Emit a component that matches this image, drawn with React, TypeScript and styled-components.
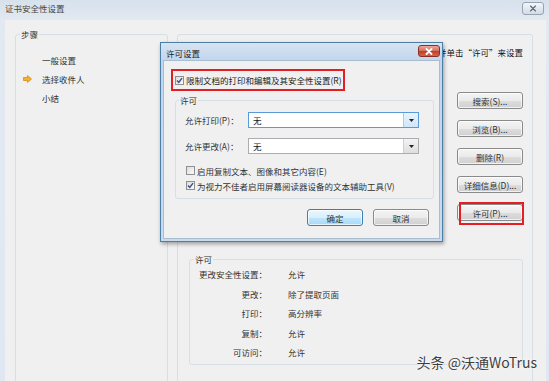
import React from "react";
import styled, { createGlobalStyle } from "styled-components";

const GlobalStyle = createGlobalStyle`
  html, body { margin: 0; padding: 0; }
  body {
    font-family: "Noto Sans CJK SC", "Noto Sans", sans-serif;
    font-size: 8.5px;
    color: #222;
    background: #f0f0f0;
  }
`;

const Window = styled.div`
  position: relative;
  width: 549px;
  height: 381px;
  overflow: hidden;
  display: flex;
  flex-direction: column;
  background: linear-gradient(to bottom, #d7e1ec 0, #e2e9f1 20px, #dfe8f2 100%);
`;

const TitleBar = styled.div`
  height: 20px;
  flex: none;
  box-sizing: border-box;
  display: flex;
  align-items: flex-start;
  justify-content: space-between;
  padding: 2px 5px 0 5px;
  line-height: 12px;
  color: #444;
`;

const CloseBox = styled.div<{ $danger?: boolean }>`
  width: 22px;
  height: 13px;
  box-sizing: border-box;
  border: 1px solid ${(p) => (p.$danger ? "#8a2f22" : "#97a3b1")};
  border-radius: 3px;
  background: ${(p) =>
    p.$danger
      ? "linear-gradient(to bottom, #e9a99c 0%, #d5735f 45%, #c13f28 55%, #d2654c 100%)"
      : "linear-gradient(to bottom, #f3f6f9 0%, #e2e8ef 50%, #d3dbe4 100%)"};
  display: flex;
  align-items: center;
  justify-content: center;
`;

const Client = styled.div`
  flex: 1;
  min-height: 0;
  margin: 0 3px 0 5px;
  background: #f0f0f0;
  display: flex;
  gap: 9px;
  padding: 8px 0 0 10px;
`;

const Group = styled.fieldset`
  margin: 0;
  min-width: 0;
  box-sizing: border-box;
  border: 1px solid #d5dfe5;
  border-radius: 3px;
  padding: 0 4px;
`;

const Legend = styled.legend`
  padding: 0 1px;
  line-height: 12px;
  color: #333;
`;

const StepsGroup = styled(Group)`
  width: 153px;
  margin-bottom: -10px;
`;

const StepList = styled.div`
  margin-top: 10px;
  padding-left: 3px;
`;

const Step = styled.div`
  height: 19px;
  display: flex;
  align-items: center;
  color: #333;
`;

const StepMarker = styled.span`
  width: 19px;
  display: flex;
  align-items: center;
`;

const RightPanel = styled.div`
  width: 356px;
  box-sizing: border-box;
  margin-top: 6px;
  margin-bottom: -10px;
  border: 1px solid #d5dfe5;
  border-radius: 3px;
  padding: 0 9px 0 11px;
  display: flex;
  flex-direction: column;
`;

const Hint = styled.div`
  margin-top: 11px;
  line-height: 12px;
  text-align: right;
  white-space: nowrap;
  overflow: hidden;
  color: #111;
`;

const ActionColumn = styled.div`
  align-self: flex-end;
  width: 66px;
  margin-top: 34px;
  display: flex;
  flex-direction: column;
  gap: 11px;
`;

const WinButton = styled.div<{ $default?: boolean; $w?: number }>`
  width: ${(p) => p.$w ?? 66}px;
  height: 17px;
  box-sizing: border-box;
  border: 1px solid ${(p) => (p.$default ? "#3c7fb1" : "#8a8a8a")};
  border-radius: 3px;
  background: ${(p) =>
    p.$default
      ? "linear-gradient(to bottom, #eaf6fd 0%, #d9f0fc 50%, #bee6fd 52%, #a7d9f5 100%)"
      : "linear-gradient(to bottom, #f4f4f4 0%, #ebebeb 50%, #dddddd 52%, #d0d0d0 100%)"};
  box-shadow: inset 0 0 0 1px rgba(255, 255, 255, 0.7);
  display: flex;
  align-items: center;
  justify-content: center;
  color: #333;
  line-height: 12px;
`;

const HighlightWrap = styled.div`
  position: relative;
`;

const RedMark = styled.div`
  position: absolute;
  left: 2px;
  top: -2px;
  width: 65px;
  height: 23px;
  box-sizing: border-box;
  border: 2px solid #e31e24;
`;

const PermGroup = styled(Group)`
  margin-top: 32px;
  margin-right: 0;
  padding-bottom: 1px;
`;

const PermRow = styled.div`
  display: grid;
  grid-template-columns: 73px 1fr;
  column-gap: 21px;
  height: 19.5px;
  line-height: 19.5px;
  color: #333;
`;

const PermLabel = styled.span`
  text-align: right;
  white-space: nowrap;
`;

const Dialog = styled.div`
  position: absolute;
  left: 160px;
  top: 42px;
  width: 283px;
  height: 200px;
  box-sizing: border-box;
  border: 1px solid #4b7fa8;
  padding: 0 2px 2px;
  background: linear-gradient(to bottom, #d6e4f3 0, #c3d6ec 17px, #c9dbef 100%);
  box-shadow: 1px 2px 4px rgba(0, 0, 0, 0.35);
  display: flex;
  flex-direction: column;
`;

const DialogTitle = styled.div`
  height: 17px;
  flex: none;
  display: flex;
  justify-content: space-between;
  align-items: flex-start;
  padding-left: 3px;
`;

const DialogTitleText = styled.span`
  margin-top: 4px;
  line-height: 12px;
  color: #222;
`;

const DialogClose = styled(CloseBox)`
  margin-top: 2px;
  height: 12px;
`;

const DialogBody = styled.div`
  flex: 1;
  background: #f0f0f0;
  border: 1px solid #a9bdd1;
  display: flex;
  flex-direction: column;
  padding-top: 8px;
`;

const RedBox = styled.div`
  align-self: flex-start;
  margin-left: 7px;
  height: 22px;
  box-sizing: border-box;
  border: 2px solid #e31e24;
  padding: 0 1px 0 2px;
  display: flex;
  align-items: center;
  gap: 2px;
  white-space: nowrap;
`;

const LimitGroup = styled(Group)`
  margin: 3px 5px 0 11px;
  padding: 0 14px 5px 9px;
  border-color: #d5dfe5;
`;

const LimitLegend = styled(Legend)`
  margin-left: -6px;
`;

const ComboRow = styled.div<{ $gap: number }>`
  display: flex;
  align-items: center;
  height: 16px;
  margin-top: ${(p) => p.$gap}px;
`;

const ComboLabel = styled.span`
  width: 63px;
  flex: none;
  white-space: nowrap;
  color: #333;
`;

const Combo = styled.div<{ $focused?: boolean }>`
  flex: 1;
  height: 16px;
  box-sizing: border-box;
  border: 1px solid ${(p) => (p.$focused ? "#5b9ad8" : "#abadb3")};
  background: #fff;
  display: flex;
  align-items: center;
  padding-left: 4px;
`;

const ComboValue = styled.span`
  flex: 1;
`;

const ComboDrop = styled.span<{ $focused?: boolean }>`
  width: 14px;
  align-self: stretch;
  display: flex;
  align-items: center;
  justify-content: center;
  background: ${(p) =>
    p.$focused
      ? "linear-gradient(to bottom, #e9f4fd, #cfe6fa)"
      : "linear-gradient(to bottom, #f3f3f3, #dedede)"};
  border-left: 1px solid ${(p) => (p.$focused ? "#a9cbec" : "#d0d0d0")};
`;

const CheckRow = styled.div<{ $gap: number }>`
  display: flex;
  align-items: center;
  gap: 2px;
  height: 15px;
  margin-top: ${(p) => p.$gap}px;
  margin-left: 1px;
  white-space: nowrap;
  color: #333;
`;

const Box = styled.span`
  width: 9px;
  height: 9px;
  flex: none;
  box-sizing: border-box;
  border: 1px solid #8f8f8f;
  background: linear-gradient(135deg, #dcdcdc, #fbfbfb);
  display: flex;
  align-items: center;
  justify-content: center;
`;

const DialogButtons = styled.div`
  display: flex;
  justify-content: flex-end;
  gap: 10px;
  margin-top: 10px;
  padding-right: 10px;
`;

const Watermark = styled.div`
  position: absolute;
  right: 12px;
  bottom: 10px;
  font-size: 14px;
  line-height: 18px;
  color: #3d3d3d;
  text-shadow: 0 0 2px #fff, 0 0 1px #fff;
  white-space: nowrap;
`;

function CheckBox({ checked }: { checked?: boolean }) {
  return (
    <Box>
      {checked && (
        <svg width="7" height="7" viewBox="0 0 7 7">
          <polyline points="1,3.6 2.8,5.5 6,1.2" fill="none" stroke="#3b4f82" strokeWidth="1.4" />
        </svg>
      )}
    </Box>
  );
}

function XGlyph({ color, bold }: { color: string; bold?: boolean }) {
  return (
    <svg width="8" height="7" viewBox="0 0 8 7">
      <path d="M1.5 1 L6.5 6 M6.5 1 L1.5 6" stroke={color} strokeWidth={bold ? 1.8 : 1.1} strokeLinecap="round" />
    </svg>
  );
}

function DropArrow() {
  return (
    <svg width="5" height="3" viewBox="0 0 5 3">
      <polygon points="0,0 5,0 2.5,3" fill="#222" />
    </svg>
  );
}

function StepArrow() {
  return (
    <svg width="9" height="8" viewBox="0 0 9 8">
      <polygon points="0.5,2.5 4.5,2.5 4.5,0.5 8.5,4 4.5,7.5 4.5,5.5 0.5,5.5" fill="#f4b22a" stroke="#d98a12" strokeWidth="0.8" />
    </svg>
  );
}

const permissions = [
  ["更改安全性设置：", "允许"],
  ["更改：", "除了提取页面"],
  ["打印：", "高分辨率"],
  ["复制：", "允许"],
  ["可访问：", "允许"],
];

const actions = ["搜索(S)...", "浏览(B)...", "删除(R)", "详细信息(D)..."];

export default function App() {
  return (
    <>
      <GlobalStyle />
      <Window>
        <TitleBar>
          <span>证书安全性设置</span>
          <CloseBox>
            <XGlyph color="#5d6875" />
          </CloseBox>
        </TitleBar>
        <Client>
          <StepsGroup>
            <Legend>步骤</Legend>
            <StepList>
              <Step>
                <StepMarker />
                一般设置
              </Step>
              <Step>
                <StepMarker>
                  <StepArrow />
                </StepMarker>
                选择收件人
              </Step>
              <Step>
                <StepMarker />
                小结
              </Step>
            </StepList>
          </StepsGroup>
          <RightPanel>
            <Hint>选择一个或多个收件人并单击“许可”来设置</Hint>
            <ActionColumn>
              {actions.map((a) => (
                <WinButton key={a}>{a}</WinButton>
              ))}
              <HighlightWrap>
                <WinButton>许可(P)...</WinButton>
                <RedMark />
              </HighlightWrap>
            </ActionColumn>
            <PermGroup>
              <Legend>许可</Legend>
              {permissions.map(([k, v]) => (
                <PermRow key={k}>
                  <PermLabel>{k}</PermLabel>
                  <span>{v}</span>
                </PermRow>
              ))}
            </PermGroup>
          </RightPanel>
        </Client>

        <Dialog>
          <DialogTitle>
            <DialogTitleText>许可设置</DialogTitleText>
            <DialogClose $danger>
              <XGlyph color="#fff" bold />
            </DialogClose>
          </DialogTitle>
          <DialogBody>
            <RedBox>
              <CheckBox checked />
              限制文档的打印和编辑及其安全性设置(R)
            </RedBox>
            <LimitGroup>
              <LimitLegend>许可</LimitLegend>
              <ComboRow $gap={6}>
                <ComboLabel>允许打印(P)：</ComboLabel>
                <Combo $focused>
                  <ComboValue>无</ComboValue>
                  <ComboDrop $focused>
                    <DropArrow />
                  </ComboDrop>
                </Combo>
              </ComboRow>
              <ComboRow $gap={10}>
                <ComboLabel>允许更改(A)：</ComboLabel>
                <Combo>
                  <ComboValue>无</ComboValue>
                  <ComboDrop>
                    <DropArrow />
                  </ComboDrop>
                </Combo>
              </ComboRow>
              <CheckRow $gap={9}>
                <CheckBox />
                启用复制文本、图像和其它内容(E)
              </CheckRow>
              <CheckRow $gap={0}>
                <CheckBox checked />
                为视力不佳者启用屏幕阅读器设备的文本辅助工具(V)
              </CheckRow>
            </LimitGroup>
            <DialogButtons>
              <WinButton $default $w={56}>
                确定
              </WinButton>
              <WinButton $w={56}>取消</WinButton>
            </DialogButtons>
          </DialogBody>
        </Dialog>

        <Watermark>头条 @沃通WoTrus</Watermark>
      </Window>
    </>
  );
}
